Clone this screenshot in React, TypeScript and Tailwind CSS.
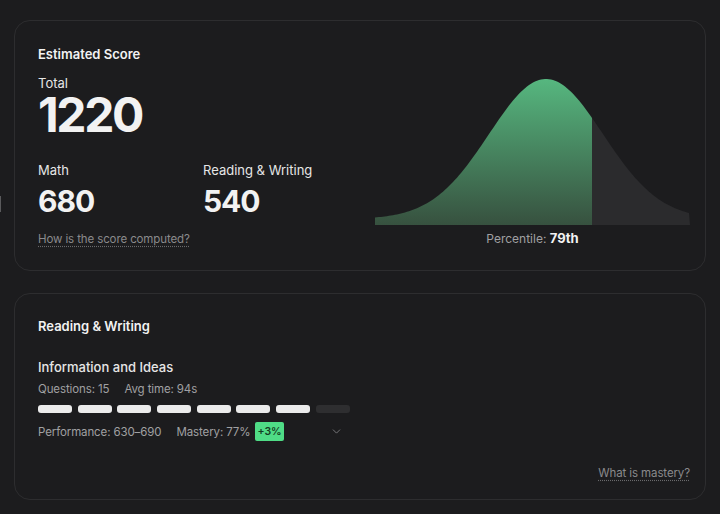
import { ChevronDown } from "lucide-react";

const CHART_W = 315;
const CHART_H = 150;
const PEAK_X = 171;
const CUTOFF_X = 217;

function curveY(x: number) {
  const d = x - PEAK_X;
  const h = 6 + 140 * Math.exp(-(d * d) / (2 * 57 * 57));
  return CHART_H - h;
}

function bellPath() {
  let d = `M0 ${CHART_H} L0 ${curveY(0).toFixed(2)}`;
  for (let x = 2; x <= CHART_W; x += 2) {
    d += ` L${x} ${curveY(x).toFixed(2)}`;
  }
  d += ` L${CHART_W} ${CHART_H} Z`;
  return d;
}

function BellChart() {
  const path = bellPath();
  return (
    <svg width={CHART_W} height={CHART_H} viewBox={`0 0 ${CHART_W} ${CHART_H}`}>
      <defs>
        <linearGradient id="greenFill" x1="0" y1="0" x2="0" y2="1">
          <stop offset="0%" stopColor="#56b77f" />
          <stop offset="100%" stopColor="#37513f" />
        </linearGradient>
        <clipPath id="leftSide">
          <rect x="0" y="0" width={CUTOFF_X} height={CHART_H} />
        </clipPath>
        <clipPath id="rightSide">
          <rect x={CUTOFF_X} y="0" width={CHART_W - CUTOFF_X} height={CHART_H} />
        </clipPath>
      </defs>
      <path d={path} fill="#2b2b2d" clipPath="url(#rightSide)" />
      <path d={path} fill="url(#greenFill)" clipPath="url(#leftSide)" />
    </svg>
  );
}

function Score({ label, value }: { label: string; value: number }) {
  return (
    <div>
      <div className="text-[13px] text-[#e6e6e6] leading-4">{label}</div>
      <div className="mt-[8px] text-[30px] font-bold tracking-[-0.035em] text-[#f2f2f2] leading-[30px]">{value}</div>
    </div>
  );
}

export default function App() {
  const segments = [1, 1, 1, 1, 1, 1, 1, 0];

  return (
    <div className="relative min-h-screen bg-[#1c1c1e] px-[14px] pt-[20px] pb-4 font-['Inter',sans-serif]">
      <div className="absolute left-0 top-[196px] h-[16px] w-[1px] bg-[#5a5a5c]" />

      <div className="flex h-[251px] rounded-[16px] border border-[#2d2d2f]">
        <div className="w-[340px] pl-[23px] pt-[25px]">
          <h2 className="text-[13px] font-semibold text-[#f2f2f2] leading-4">Estimated Score</h2>
          <div className="mt-[13px] text-[13px] text-[#e6e6e6] leading-4">Total</div>
          <div className="text-[48px] font-bold tracking-[-0.05em] text-[#f2f2f2] leading-[48px]">1220</div>
          <div className="mt-[23px] grid grid-cols-[165px_165px]">
            <Score label="Math" value={680} />
            <Score label="Reading & Writing" value={540} />
          </div>
          <a className="mt-[15px] inline-block text-[11.5px] tracking-[-0.01em] text-[#8a8a8c] leading-4 underline decoration-dotted decoration-[#6a6a6c] underline-offset-[3px]">
            How is the score computed?
          </a>
        </div>
        <div className="flex flex-1 flex-col items-start pl-[20px] pt-[54px]">
          <BellChart />
          <div className="mt-[5px] w-[315px] text-center text-[12px] text-[#a0a0a2] leading-4">
            Percentile: <span className="text-[13px] font-bold text-[#f2f2f2]">79th</span>
          </div>
        </div>
      </div>

      <div className="mt-[22px] h-[207px] rounded-[16px] border border-[#2d2d2f] pl-[23px] pr-[15px] pt-[24px]">
        <h2 className="text-[13px] font-semibold text-[#f2f2f2] leading-4">Reading &amp; Writing</h2>
        <h3 className="mt-[25px] text-[13px] font-medium text-[#e6e6e6] leading-4">Information and Ideas</h3>
        <div className="mt-[6px] flex gap-[15px] text-[11.5px] tracking-[-0.01em] text-[#a0a0a2] leading-4">
          <span>Questions: 15</span>
          <span>Avg time: 94s</span>
        </div>
        <div className="mt-[8px] flex gap-[5.7px]">
          {segments.map((on, i) => (
            <div
              key={i}
              className={on ? "h-[8px] w-[34px] rounded-[3px] bg-[#ebebeb]" : "h-[8px] w-[34px] rounded-[3px] bg-[#2e2e30]"}
            />
          ))}
        </div>
        <div className="mt-[9px] flex w-[305px] items-center text-[11.5px] tracking-[-0.01em] text-[#a0a0a2] leading-4">
          <span>Performance: 630–690</span>
          <span className="ml-[15px]">Mastery: 77%</span>
          <span className="ml-[5px] rounded-[2px] bg-[#4fdc86] px-[2px] py-[2px] text-[10.5px] font-semibold tracking-normal text-[#143d22] leading-[15px]">
            +3%
          </span>
          <ChevronDown className="ml-auto text-[#8a8a8c]" size={13} strokeWidth={1.5} />
        </div>
        <div className="mt-[24px] flex justify-end">
          <a className="text-[11.5px] tracking-[-0.01em] text-[#8a8a8c] leading-4 underline decoration-dotted decoration-[#6a6a6c] underline-offset-[3px]">
            What is mastery?
          </a>
        </div>
      </div>
    </div>
  );
}
